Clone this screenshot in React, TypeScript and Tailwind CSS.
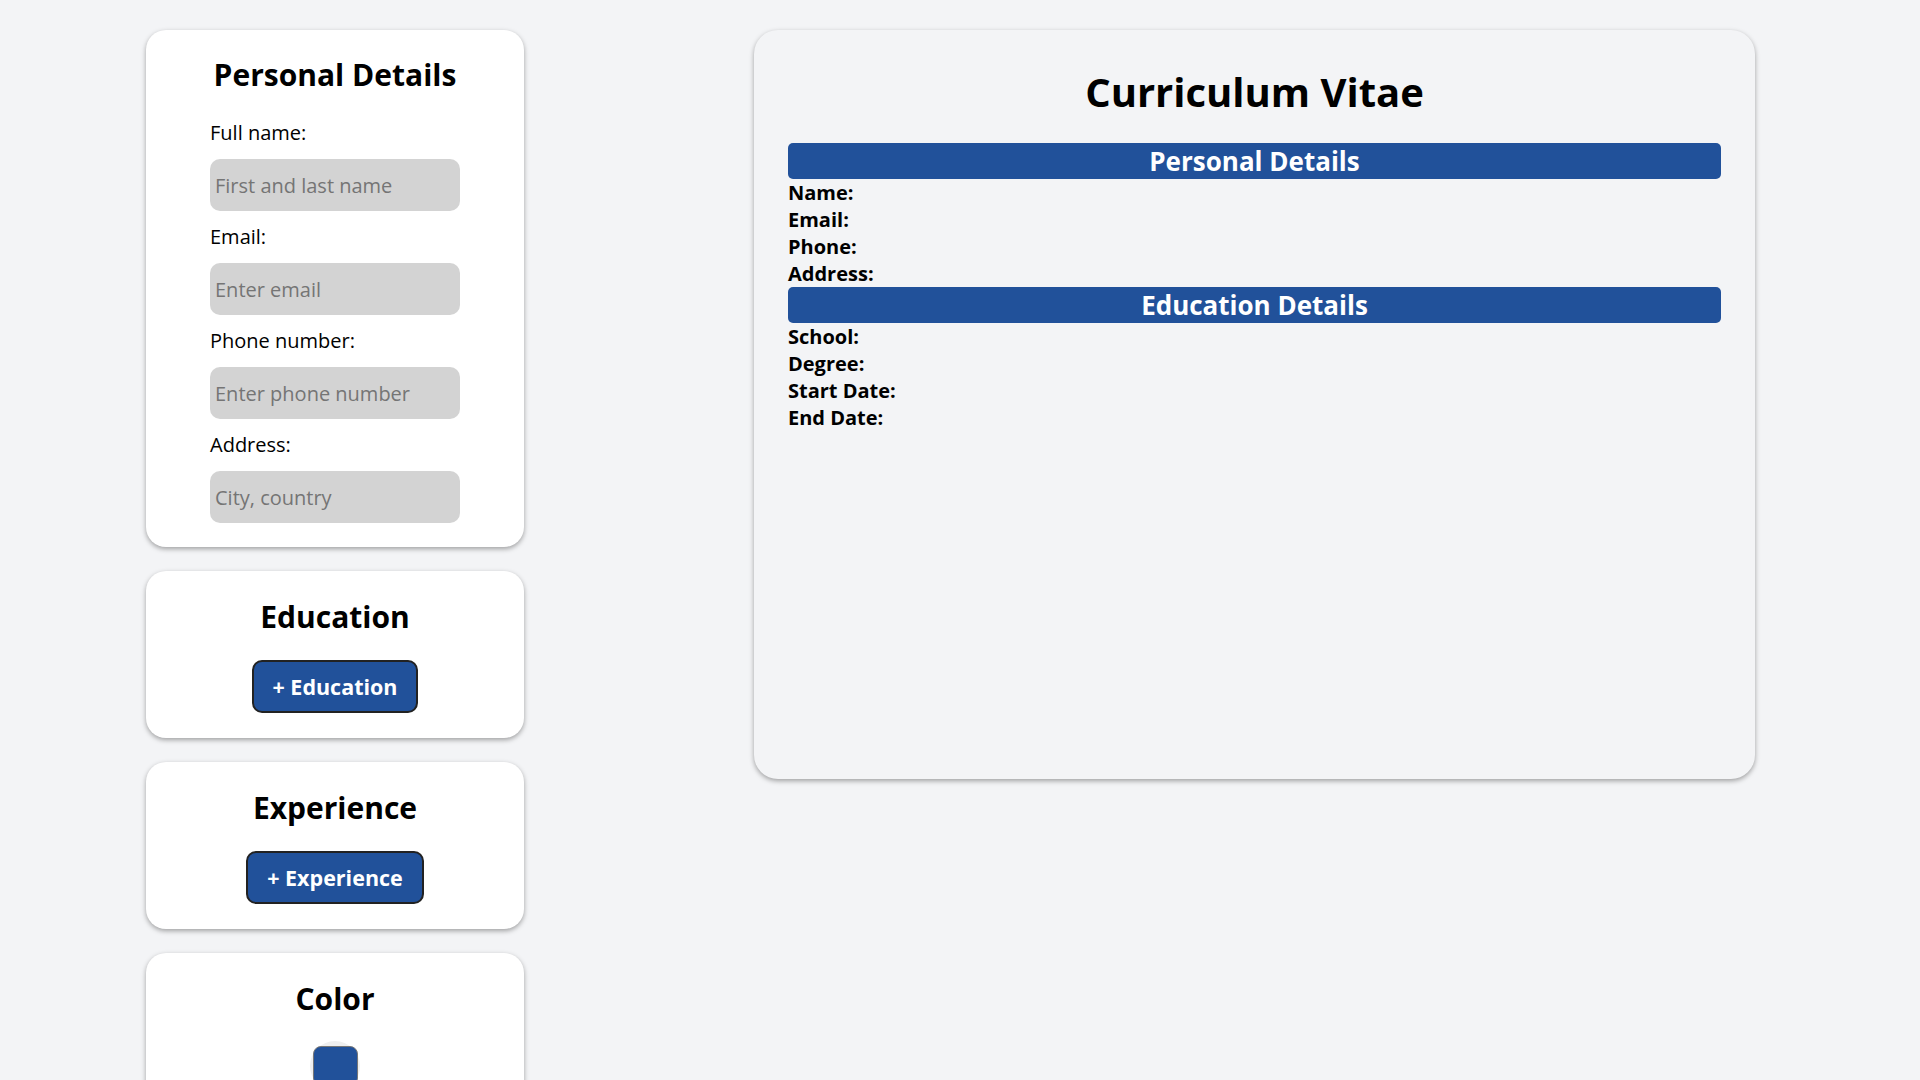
import { useState } from "react";

const fields = [
  { label: "Full name:", placeholder: "First and last name", type: "text" },
  { label: "Email:", placeholder: "Enter email", type: "email" },
  { label: "Phone number:", placeholder: "Enter phone number", type: "tel" },
  { label: "Address:", placeholder: "City, country", type: "text" },
];

const App = () => {
  const [color] = useState("#21519a");

  return (
    <div className="min-h-[1185px] bg-[#f3f4f6] font-['Open_Sans',sans-serif] leading-[normal] text-black">
      <div className="flex items-start gap-[230px] pl-[146px] pt-[30px]">
        {/* left side: forms */}
        <div className="flex w-[378px] flex-col gap-[24px]">
          <div className="flex flex-col items-center rounded-[20px] bg-white pt-[24px] pb-[24px] shadow-[0_2px_5px_rgba(0,0,0,0.35)]">
            <h2 className="text-[30px] font-bold">Personal Details</h2>
            <div className="mt-[24px] flex w-[250px] flex-col">
              {fields.map((f, i) => (
                <div key={f.label} className={i > 0 ? "mt-[12px]" : ""}>
                  <label className="block text-[20px]">{f.label}</label>
                  <input
                    type={f.type}
                    placeholder={f.placeholder}
                    className="mt-[13px] h-[52px] w-[250px] rounded-[10px] bg-[#d3d3d3] px-[5px] text-[20px] outline-none placeholder:text-[#757575]"
                  />
                </div>
              ))}
            </div>
          </div>

          <div className="flex flex-col items-center rounded-[20px] bg-white pt-[25px] pb-[25px] shadow-[0_2px_5px_rgba(0,0,0,0.35)]">
            <h2 className="text-[30px] font-bold">Education</h2>
            <button className="mt-[23px] rounded-[10px] border-2 border-[#222] bg-[#21519a] px-[18px] py-[10px] text-[21.5px] font-bold text-white">
              + Education
            </button>
          </div>

          <div className="flex flex-col items-center rounded-[20px] bg-white pt-[25px] pb-[25px] shadow-[0_2px_5px_rgba(0,0,0,0.35)]">
            <h2 className="text-[30px] font-bold">Experience</h2>
            <button className="mt-[23px] rounded-[10px] border-2 border-[#222] bg-[#21519a] px-[19px] py-[10px] text-[21.5px] font-bold text-white">
              + Experience
            </button>
          </div>

          <div className="flex flex-col items-center rounded-[20px] bg-white pt-[25px] pb-[30px] shadow-[0_2px_5px_rgba(0,0,0,0.35)]">
            <h2 className="text-[30px] font-bold">Color</h2>
            <div className="mt-[22px] flex h-[50px] w-[50px] justify-center rounded-full bg-[#efefef] pt-[5px]">
              <div
                className="h-[40px] w-[45px] rounded-[8px] border border-[#777]"
                style={{ backgroundColor: color }}
              />
            </div>
          </div>
        </div>

        {/* right side: cv preview */}
        <div className="flex h-[749px] w-[1001px] flex-col rounded-[24px] bg-[#f3f4f6] px-[34px] pt-[34px] shadow-[0_2px_5px_rgba(0,0,0,0.35)]">
          <h1 className="text-center text-[40px] font-bold">Curriculum Vitae</h1>
          <div className="mt-[24px] flex h-[36px] items-center justify-center rounded-[5px] bg-[#21519a] text-[26px] font-bold text-white">
            Personal Details
          </div>
          <div className="text-[20px] font-bold">
            <p>Name:</p>
            <p>Email:</p>
            <p>Phone:</p>
            <p>Address:</p>
          </div>
          <div className="flex h-[36px] items-center justify-center rounded-[5px] bg-[#21519a] text-[26px] font-bold text-white">
            Education Details
          </div>
          <div className="text-[20px] font-bold">
            <p>School:</p>
            <p>Degree:</p>
            <p>Start Date:</p>
            <p>End Date:</p>
          </div>
        </div>
      </div>
    </div>
  );
};

export default App;
